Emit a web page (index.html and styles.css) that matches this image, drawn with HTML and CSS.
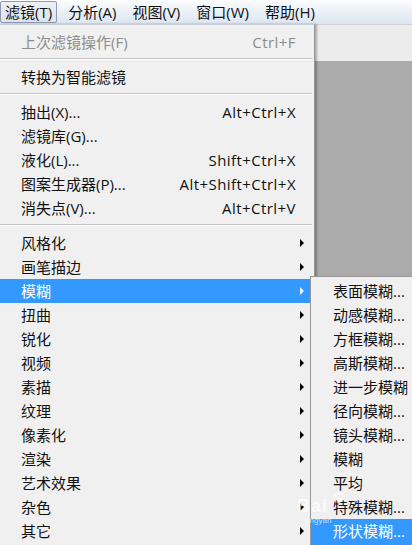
FILE: index.html
```html
<!DOCTYPE html>
<html lang="zh-CN">
<head>
<meta charset="utf-8">
<title>滤镜菜单</title>
<link rel="stylesheet" href="styles.css">
</head>
<body>
<div class="screen">
  <nav class="menubar">
    <span class="mb-item active">滤镜(T)</span>
    <span class="mb-item">分析(A)</span>
    <span class="mb-item">视图(V)</span>
    <span class="mb-item">窗口(W)</span>
    <span class="mb-item">帮助(H)</span>
  </nav>
  <div class="workspace">
    <div class="dropdown">
      <div class="row disabled"><span class="label">上次滤镜操作(F)</span><span class="key">Ctrl+F</span><span class="arrow-col"></span></div>
      <div class="sep"></div>
      <div class="row"><span class="label">转换为智能滤镜</span><span class="arrow-col"></span></div>
      <div class="sep"></div>
      <div class="row"><span class="label">抽出(X)...</span><span class="key">Alt+Ctrl+X</span><span class="arrow-col"></span></div>
      <div class="row"><span class="label">滤镜库(G)...</span><span class="arrow-col"></span></div>
      <div class="row"><span class="label">液化(L)...</span><span class="key">Shift+Ctrl+X</span><span class="arrow-col"></span></div>
      <div class="row"><span class="label">图案生成器(P)...</span><span class="key">Alt+Shift+Ctrl+X</span><span class="arrow-col"></span></div>
      <div class="row"><span class="label">消失点(V)...</span><span class="key">Alt+Ctrl+V</span><span class="arrow-col"></span></div>
      <div class="sep"></div>
      <div class="row"><span class="label">风格化</span><span class="arrow-col"><i class="arrow"></i></span></div>
      <div class="row"><span class="label">画笔描边</span><span class="arrow-col"><i class="arrow"></i></span></div>
      <div class="row selected"><span class="label">模糊</span><span class="arrow-col"><i class="arrow"></i></span></div>
      <div class="row"><span class="label">扭曲</span><span class="arrow-col"><i class="arrow"></i></span></div>
      <div class="row"><span class="label">锐化</span><span class="arrow-col"><i class="arrow"></i></span></div>
      <div class="row"><span class="label">视频</span><span class="arrow-col"><i class="arrow"></i></span></div>
      <div class="row"><span class="label">素描</span><span class="arrow-col"><i class="arrow"></i></span></div>
      <div class="row"><span class="label">纹理</span><span class="arrow-col"><i class="arrow"></i></span></div>
      <div class="row"><span class="label">像素化</span><span class="arrow-col"><i class="arrow"></i></span></div>
      <div class="row"><span class="label">渲染</span><span class="arrow-col"><i class="arrow"></i></span></div>
      <div class="row"><span class="label">艺术效果</span><span class="arrow-col"><i class="arrow"></i></span></div>
      <div class="row"><span class="label">杂色</span><span class="arrow-col"><i class="arrow"></i></span></div>
      <div class="row"><span class="label">其它</span><span class="arrow-col"><i class="arrow"></i></span></div>
    </div>
    <div class="side">
      <div class="options-bar"></div>
      <div class="canvas"></div>
    </div>
    <div class="submenu">
      <div class="sub-row">表面模糊...</div>
      <div class="sub-row">动感模糊...</div>
      <div class="sub-row">方框模糊...</div>
      <div class="sub-row">高斯模糊...</div>
      <div class="sub-row">进一步模糊</div>
      <div class="sub-row">径向模糊...</div>
      <div class="sub-row">镜头模糊...</div>
      <div class="sub-row">模糊</div>
      <div class="sub-row">平均</div>
      <div class="sub-row">特殊模糊...</div>
      <div class="sub-row selected">形状模糊...</div>
    </div>
  </div>
  <div class="watermark">
    <span class="wm-bai">Bai</span>
    <svg class="wm-paw" width="13" height="13" viewBox="0 0 14 14"><circle cx="3" cy="5" r="1.6"/><circle cx="6" cy="2.5" r="1.6"/><circle cx="9.5" cy="3" r="1.6"/><circle cx="11.5" cy="6" r="1.5"/><ellipse cx="7" cy="9.5" rx="3.2" ry="2.8"/></svg>
    <span class="wm-url">jingyan</span>
  </div>
</div>
</body>
</html>
```

FILE: styles.css
```css
* { box-sizing: border-box; }
html, body { margin: 0; padding: 0; }
body {
  width: 412px;
  height: 545px;
  overflow: hidden;
  background: #ababab;
  font-family: "Open Sans", "Noto Sans CJK SC", sans-serif;
  font-size: 15px;
  color: #111;
}
.screen {
  position: relative;
  width: 412px;
  height: 545px;
  overflow: hidden;
}
.menubar {
  height: 24px;
  display: flex;
  align-items: center;
  gap: 6px;
  background: linear-gradient(#fcfdfe, #e9eff7 55%, #dce5f1);
  white-space: nowrap;
}
.mb-item {
  height: 22px;
  line-height: 20px;
  padding: 0 4px;
  border: 1px solid transparent;
  border-radius: 2px;
}
.mb-item.active {
  border-color: #8b9bb3;
  background: linear-gradient(#eef1f5, #dde3eb);
}
.workspace {
  position: relative;
  display: flex;
  height: 521px;
}
.dropdown {
  width: 315px;
  flex: none;
  background: #f0f0f0;
  border-top: 1px solid #c9ced6;
  border-right: 1px solid #979797;
  padding-top: 5px;
  box-shadow: 2px 0 2px rgba(0, 0, 0, 0.28);
  position: relative;
  z-index: 1;
}
.row {
  display: flex;
  align-items: center;
  height: 24px;
  line-height: 24px;
  padding-left: 21px;
  white-space: nowrap;
}
.label { flex: 1; }
.key { text-align: right; letter-spacing: 0.45px; }
.arrow-col {
  width: 18px;
  flex: none;
  display: flex;
  align-items: center;
  padding-left: 4px;
}
.arrow {
  display: block;
  width: 0;
  height: 0;
  border-left: 4px solid #000;
  border-top: 4px solid transparent;
  border-bottom: 4px solid transparent;
}
.row.disabled { color: #8d8d8d; }
.row.selected { background: #3399ff; color: #fff; }
.row.selected .arrow { border-left-color: #e8f3ff; }
.sep { padding: 4px 2px 5px 0; }
.sep::before {
  content: "";
  display: block;
  border-top: 1px solid #c3c3c3;
  border-bottom: 1px solid #fff;
}
.side {
  flex: 1;
  display: flex;
  flex-direction: column;
}
.options-bar {
  height: 37px;
  background: #ececec;
  border-top: 1px solid #d0d0d0;
}
.canvas {
  flex: 1;
  background: #ababab;
}
.submenu {
  position: absolute;
  top: 252px;
  left: 310px;
  width: 130px;
  height: 280px;
  background: #f0f0f0;
  border: 1px solid #979797;
  padding-top: 2px;
  z-index: 2;
}
.sub-row {
  height: 24px;
  line-height: 24px;
  padding-left: 22px;
  white-space: nowrap;
}
.sub-row.selected { background: #3399ff; color: #fff; height: 26px; }
.watermark {
  position: absolute;
  left: 292px;
  top: 490px;
  width: 60px;
  height: 40px;
  z-index: 3;
  pointer-events: none;
}
.wm-bai {
  position: absolute;
  left: 5px;
  top: 8px;
  font-family: "Liberation Sans", sans-serif;
  font-weight: bold;
  font-size: 18px;
  line-height: 16px;
  letter-spacing: 1px;
  color: rgba(255, 255, 255, 0.7);
}
.wm-paw {
  position: absolute;
  left: 41px;
  top: 1px;
  fill: rgba(255, 255, 255, 0.7);
}
.wm-url {
  position: absolute;
  left: 14px;
  top: 26px;
  font-family: "Liberation Sans", sans-serif;
  font-size: 8px;
  line-height: 9px;
  color: rgba(255, 255, 255, 0.7);
}
```
